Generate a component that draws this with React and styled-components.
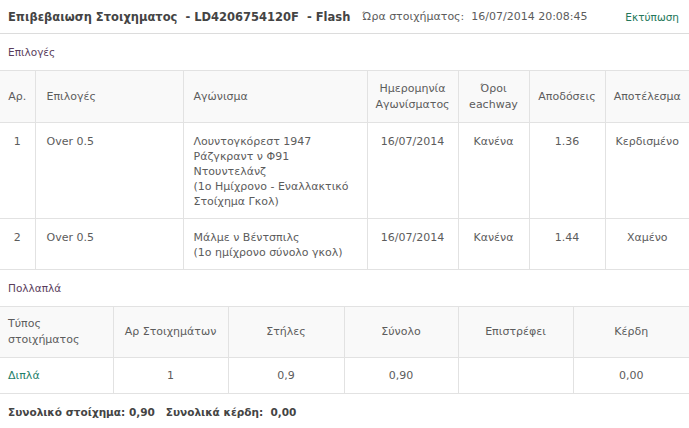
import React from "react";
import styled, { createGlobalStyle } from "styled-components";

const GlobalStyle = createGlobalStyle`
  html, body {
    margin: 0;
    padding: 0;
    background: #fff;
  }
  body {
    font-family: "DejaVu Sans", Verdana, sans-serif;
    font-size: 11px;
    color: #5c5c5c;
  }
`;

const Page = styled.div`
  width: 689px;
  display: flex;
  flex-direction: column;
`;

const TopBar = styled.div`
  height: 34px;
  display: flex;
  align-items: center;
  padding: 0 10px 0 8px;
  border-bottom: 1px solid #dcdcdc;
  box-sizing: border-box;
  gap: 12px;
`;

const Title = styled.h1`
  margin: 0;
  font-size: 11.5px;
  font-weight: bold;
  color: #444;
  white-space: pre;
`;

const BetTime = styled.span`
  font-size: 11px;
  color: #5c5c5c;
  white-space: pre;
`;

const PrintLink = styled.a`
  margin-left: auto;
  font-size: 10.5px;
  color: #23775a;
  text-decoration: none;
  cursor: pointer;
`;

const SectionLabel = styled.div`
  height: ${(p) => p.$h}px;
  display: flex;
  align-items: center;
  padding: 0 8px;
  color: #5a3d5c;
  font-size: 10.5px;
`;

const Table = styled.table`
  width: 689px;
  border-collapse: collapse;
  table-layout: fixed;
`;

const Th = styled.th`
  font-weight: normal;
  background: #f9f9f9;
  color: #5c5c5c;
  height: ${(p) => p.$h}px;
  padding: 0 ${(p) => p.$pl ?? 8}px;
  text-align: ${(p) => p.$align || "center"};
  line-height: 16px;
  border-top: 1px solid #e2e2e2;
  border-bottom: 1px solid #e2e2e2;
  border-left: 1px solid #e2e2e2;
  box-sizing: border-box;
  &:first-child {
    border-left: none;
  }
`;

const Td = styled.td`
  color: ${(p) => p.$color || "#5c5c5c"};
  padding: ${(p) => p.$pt ?? 11}px ${(p) => p.$pl ?? 8}px ${(p) => p.$pb ?? 9}px;
  text-align: ${(p) => p.$align || "center"};
  vertical-align: ${(p) => p.$valign || "top"};
  line-height: 15px;
  border-bottom: 1px solid #e2e2e2;
  border-left: 1px solid #e2e2e2;
  &:first-child {
    border-left: none;
  }
`;

const Summary = styled.div`
  height: 36px;
  display: flex;
  align-items: center;
  padding: 0 8px;
  font-weight: bold;
  color: #444;
  font-size: 10.5px;
  white-space: pre;
  border-bottom: 1px solid #e2e2e2;
  box-sizing: border-box;
`;

const selections = [
  {
    n: 1,
    pick: "Over 0.5",
    event: ["Λουντογκόρεστ 1947", "Ράζγκραντ ν Φ91", "Ντουντελάνζ", "(1ο Ημίχρονο - Εναλλακτικό", "Στοίχημα Γκολ)"],
    date: "16/07/2014",
    ew: "Κανένα",
    odds: "1.36",
    result: "Κερδισμένο",
  },
  {
    n: 2,
    pick: "Over 0.5",
    event: ["Μάλμε ν Βέντσπιλς", "(1ο ημίχρονο σύνολο γκολ)"],
    date: "16/07/2014",
    ew: "Κανένα",
    odds: "1.44",
    result: "Χαμένο",
  },
];

export default function App() {
  return (
    <Page>
      <GlobalStyle />
      <TopBar>
        <Title>{"Επιβεβαιωση Στοιχηματος  - LD4206754120F  - Flash"}</Title>
        <BetTime>{"Ώρα στοιχήματος:  16/07/2014 20:08:45"}</BetTime>
        <PrintLink>Εκτύπωση</PrintLink>
      </TopBar>

      <SectionLabel $h={36}>Επιλογές</SectionLabel>

      <Table>
        <colgroup>
          <col style={{ width: 35 }} />
          <col style={{ width: 148 }} />
          <col style={{ width: 184 }} />
          <col style={{ width: 91 }} />
          <col style={{ width: 71 }} />
          <col style={{ width: 76 }} />
          <col style={{ width: 84 }} />
        </colgroup>
        <thead>
          <tr>
            <Th $h={52} $pl={4}>Αρ.</Th>
            <Th $h={52} $align="left" $pl={11}>Επιλογές</Th>
            <Th $h={52} $align="left" $pl={10}>Αγώνισμα</Th>
            <Th $h={52} $pl={4}>Ημερομηνία Αγωνίσματος</Th>
            <Th $h={52} $pl={4}>Όροι eachway</Th>
            <Th $h={52} $pl={4}>Αποδόσεις</Th>
            <Th $h={52} $pl={4}>Αποτέλεσμα</Th>
          </tr>
        </thead>
        <tbody>
          {selections.map((s) => (
            <tr key={s.n}>
              <Td $pl={4}>{s.n}</Td>
              <Td $align="left" $pl={11}>{s.pick}</Td>
              <Td $align="left" $pl={10}>
                {s.event.map((l, i) => (
                  <div key={i}>{l}</div>
                ))}
              </Td>
              <Td $pl={4}>{s.date}</Td>
              <Td $pl={4}>{s.ew}</Td>
              <Td $pl={4}>{s.odds}</Td>
              <Td $pl={4}>{s.result}</Td>
            </tr>
          ))}
        </tbody>
      </Table>

      <SectionLabel $h={36}>Πολλαπλά</SectionLabel>

      <Table>
        <colgroup>
          <col style={{ width: 113 }} />
          <col style={{ width: 115 }} />
          <col style={{ width: 116 }} />
          <col style={{ width: 114 }} />
          <col style={{ width: 115 }} />
          <col style={{ width: 116 }} />
        </colgroup>
        <thead>
          <tr>
            <Th $h={51} $align="left" $pl={8}>Τύπος στοιχήματος</Th>
            <Th $h={51}>Αρ Στοιχημάτων</Th>
            <Th $h={51}>Στήλες</Th>
            <Th $h={51}>Σύνολο</Th>
            <Th $h={51}>Επιστρέφει</Th>
            <Th $h={51}>Κέρδη</Th>
          </tr>
        </thead>
        <tbody>
          <tr>
            <Td $align="left" $color="#1f7f6a" $pt={10} $pb={10}>Διπλά</Td>
            <Td $pt={10} $pb={10}>1</Td>
            <Td $pt={10} $pb={10}>0,9</Td>
            <Td $pt={10} $pb={10}>0,90</Td>
            <Td $pt={10} $pb={10}></Td>
            <Td $pt={10} $pb={10}>0,00</Td>
          </tr>
        </tbody>
      </Table>

      <Summary>{"Συνολικό στοίχημα: 0,90   Συνολικά κέρδη:  0,00"}</Summary>
    </Page>
  );
}
